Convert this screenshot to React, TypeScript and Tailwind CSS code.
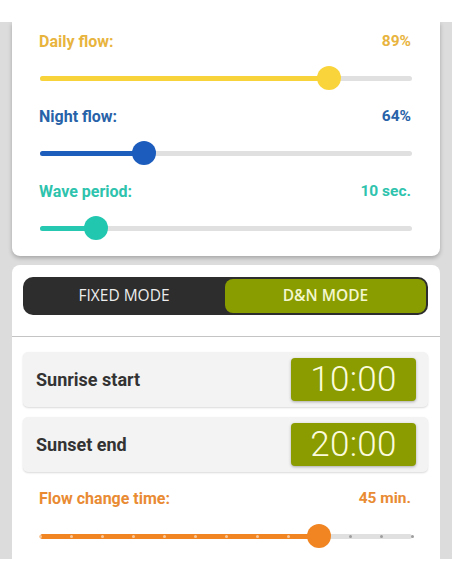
import React from "react";

type SliderProps = {
  pos: number;
  fill: string;
  thumb: string;
  ticks?: number;
};

const Slider: React.FC<SliderProps> = ({ pos, fill, thumb, ticks }) => (
  <div className="relative h-6 flex items-center">
    <div className="relative w-full h-[5px] rounded-full bg-[#e0e0e0]">
      <div className={`absolute left-0 top-0 h-full rounded-full ${fill}`} style={{ width: `${pos * 100}%` }} />
      {ticks
        ? Array.from({ length: ticks + 1 }).map((_, i) => (
            <span
              key={i}
              className={`absolute top-1/2 w-[3px] h-[3px] -mt-[1.5px] -ml-[1.5px] rounded-full ${i / ticks <= pos ? "bg-[#f9c89a]" : "bg-[#9e9e9e]"}`}
              style={{ left: `${(i / ticks) * 100}%` }}
            />
          ))
        : null}
    </div>
    <span
      className={`absolute top-0 w-6 h-6 -ml-3 rounded-full ${thumb}`}
      style={{ left: `${pos * 100}%` }}
    />
  </div>
);

type Row = { label: string; value: string; color: string; fill: string; thumb: string; pos: number; gap: string };

const flows: Row[] = [
  { label: "Daily flow:", value: "89%", color: "text-[#e8b43e]", fill: "bg-[#f8d43a]", thumb: "bg-[#f9d43a]", pos: 0.776, gap: "mt-0" },
  { label: "Night flow:", value: "64%", color: "text-[#2862a8]", fill: "bg-[#1d5ebd]", thumb: "bg-[#1b5cbd]", pos: 0.28, gap: "mt-[17px]" },
  { label: "Wave period:", value: "10 sec.", color: "text-[#2ec3ad]", fill: "bg-[#27c8b1]", thumb: "bg-[#22c7b0]", pos: 0.151, gap: "mt-[17px]" },
];

const Label: React.FC<{ label: string; value: string; color: string }> = ({ label, value, color }) => (
  <div className={`flex items-center justify-between h-5 text-[16px] font-bold ${color}`}>
    <span>{label}</span>
    <span className="mr-[1px] text-[15.5px]">{value}</span>
  </div>
);

const TimeRow: React.FC<{ label: string; time: string }> = ({ label, time }) => (
  <div className="h-[55px] rounded-[5px] bg-[#f3f3f3] shadow-[0_1px_2px_rgba(0,0,0,0.15)] flex items-center justify-between pl-[13px] pr-3">
    <span className="text-[18px] font-bold text-[#333333]">{label}</span>
    <div className="w-[125px] h-[43px] rounded-[4px] bg-[#8a9c00] shadow-[0_1px_3px_rgba(0,0,0,0.3)] flex items-center justify-center">
      <span className="text-[35px] font-light leading-none text-[#fbfbdc] tracking-[0.3px]">{time}</span>
    </div>
  </div>
);

export default function App() {
  return (
    <div className="w-[452px] h-[584px] bg-white flex flex-col font-['Roboto',sans-serif] overflow-hidden">
      <div className="h-[22px] bg-white" />
      <div className="h-[537px] bg-[#dcdcdc] px-3 flex flex-col gap-[9px] overflow-hidden">
        <section className="bg-white rounded-b-lg shadow-[0_2px_4px_rgba(0,0,0,0.25)] pt-[10px] pb-4 pl-[27px] pr-[28px] shrink-0">
          {flows.map((f) => (
            <div key={f.label} className={f.gap}>
              <Label label={f.label} value={f.value} color={f.color} />
              <div className="mt-[14px] pl-[1px]">
                <Slider pos={f.pos} fill={f.fill} thumb={f.thumb} />
              </div>
            </div>
          ))}
        </section>

        <section className="bg-white rounded-t-lg flex-1 flex flex-col">
          <div className="pl-[11px] pr-3 pt-3">
            <div className="h-[38px] rounded-[10px] bg-[#2d2d2d] flex p-[2px] pl-0 font-['Open_Sans',sans-serif] text-[15.5px]">
              <button className="flex-1 text-[#ececec]">FIXED MODE</button>
              <button className="w-[201px] rounded-[8px] bg-[#8a9d00] text-[#f3f7cf] font-semibold">D&amp;N MODE</button>
            </div>
          </div>
          <div className="mt-[21px] h-px bg-[#c4c4c4]" />
          <div className="pl-[11px] pr-3 mt-[15px] flex flex-col gap-[10px]">
            <TimeRow label="Sunrise start" time="10:00" />
            <TimeRow label="Sunset end" time="20:00" />
          </div>
          <div className="pl-[27px] pr-[28px] mt-[17px]">
            <Label label="Flow change time:" value="45 min." color="text-[#e98b33]" />
            <div className="mt-[15px] pl-[1px]">
              <Slider pos={0.75} fill="bg-[#f08522]" thumb="bg-[#f08522]" ticks={12} />
            </div>
          </div>
        </section>
      </div>
      <div className="flex-1 bg-white" />
    </div>
  );
}
